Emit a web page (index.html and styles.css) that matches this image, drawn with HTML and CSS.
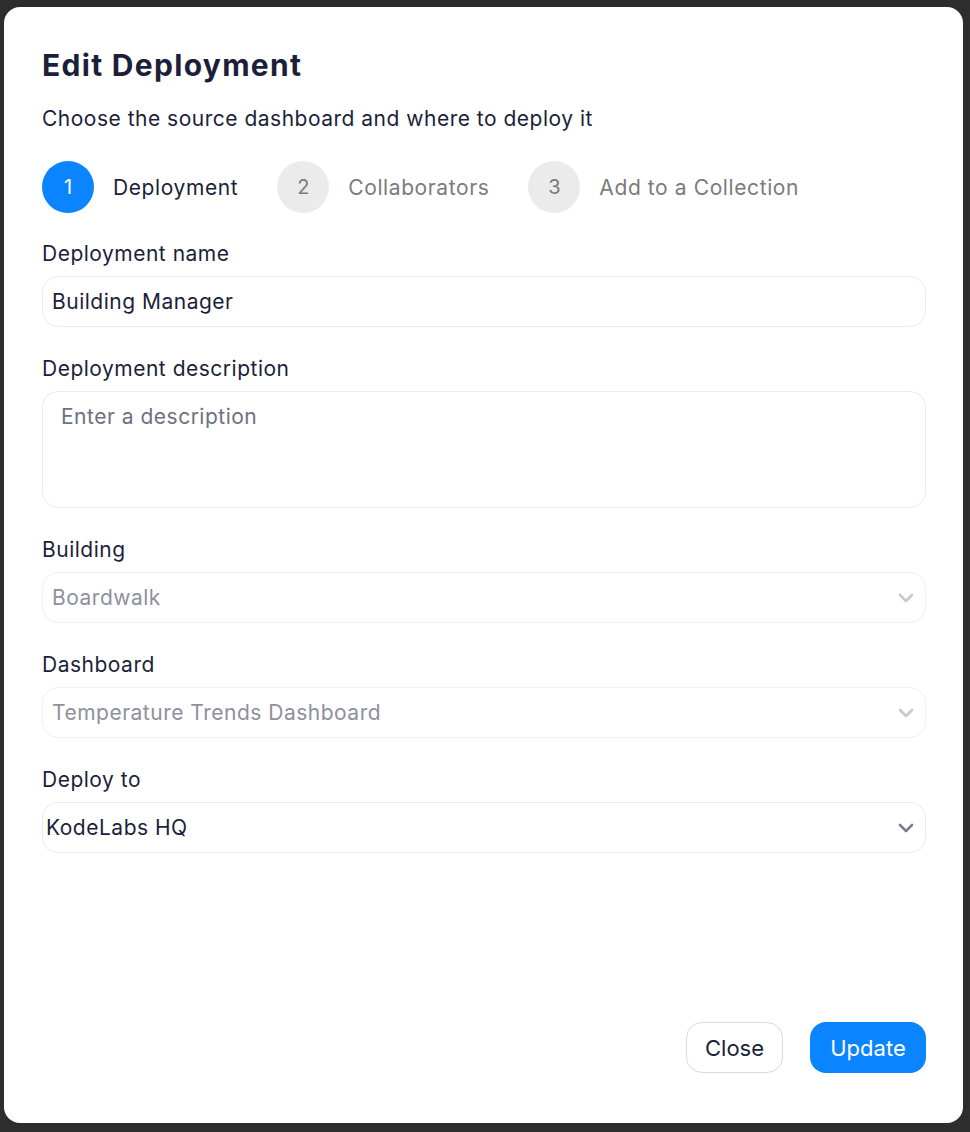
FILE: index.html
```html
<!DOCTYPE html>
<html lang="en">
<head>
<meta charset="utf-8">
<title>Edit Deployment</title>
<link rel="stylesheet" href="styles.css">
</head>
<body>
<div class="modal">
  <h1 class="title">Edit Deployment</h1>
  <p class="subtitle">Choose the source dashboard and where to deploy it</p>
  <div class="steps">
    <div class="step active"><span class="num">1</span><span class="label">Deployment</span></div>
    <div class="step"><span class="num">2</span><span class="label">Collaborators</span></div>
    <div class="step"><span class="num">3</span><span class="label">Add to a Collection</span></div>
  </div>
  <div class="form">
    <div class="field">
      <div class="flabel">Deployment name</div>
      <div class="input">Building Manager</div>
    </div>
    <div class="field">
      <div class="flabel">Deployment description</div>
      <div class="input textarea">Enter a description</div>
    </div>
    <div class="field">
      <div class="flabel">Building</div>
      <div class="input select disabled"><span>Boardwalk</span>
        <svg class="chev" width="16" height="10" viewBox="0 0 16 10"><path d="M2 2l6 6 6-6" fill="none" stroke="currentColor" stroke-width="2.6" stroke-linecap="round" stroke-linejoin="round"/></svg>
      </div>
    </div>
    <div class="field">
      <div class="flabel">Dashboard</div>
      <div class="input select disabled"><span>Temperature Trends Dashboard</span>
        <svg class="chev" width="16" height="10" viewBox="0 0 16 10"><path d="M2 2l6 6 6-6" fill="none" stroke="currentColor" stroke-width="2.6" stroke-linecap="round" stroke-linejoin="round"/></svg>
      </div>
    </div>
    <div class="field">
      <div class="flabel">Deploy to</div>
      <div class="input select open"><span>KodeLabs HQ</span>
        <svg class="chev" width="16" height="10" viewBox="0 0 16 10"><path d="M2 2l6 6 6-6" fill="none" stroke="currentColor" stroke-width="2.6" stroke-linecap="round" stroke-linejoin="round"/></svg>
      </div>
    </div>
  </div>
  <div class="footer">
    <button class="btn close">Close</button>
    <button class="btn primary">Update</button>
  </div>
</div>
</body>
</html>
```
FILE: styles.css
```css
* { box-sizing: border-box; }
html, body { margin: 0; padding: 0; }
body {
  background: #2d2d2d;
  font-family: Inter, "Liberation Sans", sans-serif;
  color: #1c1f3a;
  width: 970px;
  height: 1132px;
  padding: 7px 0 0 4px;
  overflow: hidden;
}
.modal {
  width: 959px;
  height: 1116px;
  background: #fff;
  border-radius: 16px;
  padding: 40px 37px 50px 38px;
  display: flex;
  flex-direction: column;
}
.title {
  margin: 0;
  font-size: 30px;
  line-height: 36px;
  font-weight: 700;
  letter-spacing: 1.3px;
  color: #1c1f3a;
}
.subtitle {
  margin: 24px 0 0;
  font-size: 21px;
  line-height: 24px;
  letter-spacing: 0.5px;
  color: #1c1f3a;
}
.steps {
  margin-top: 30px;
  display: flex;
  gap: 39px;
}
.step {
  display: flex;
  align-items: center;
  gap: 19px;
}
.num {
  width: 52px;
  height: 52px;
  border-radius: 50%;
  background: #ebebeb;
  color: #7b7b7b;
  font-size: 20px;
  display: flex;
  align-items: center;
  justify-content: center;
}
.label {
  font-size: 21px;
  letter-spacing: 0.6px;
  color: #7b7b7b;
}
.step.active .num { background: #0a84ff; color: #fff; }
.step.active .label { color: #1c1f3a; }
.form {
  margin-top: 29px;
  display: flex;
  flex-direction: column;
  gap: 30px;
}
.flabel {
  font-size: 21px;
  line-height: 24px;
  letter-spacing: 0.5px;
  margin-bottom: 10px;
  color: #1c1f3a;
}
.input {
  height: 51px;
  border: 1px solid #ebebef;
  border-radius: 16px;
  padding: 0 9px;
  display: flex;
  align-items: center;
  font-size: 21px;
  letter-spacing: 0.5px;
  color: #1c1f3a;
}
.textarea {
  height: 117px;
  align-items: flex-start;
  padding: 12px 18px;
  color: #6e7081;
}
.select { justify-content: space-between; padding-right: 11px; }
.select.disabled { color: #8e909c; border-color: #f1f1f4; }
.select.disabled .chev { color: #c8c8d2; }
.select.open { padding-left: 3px; }
.select.open .chev { color: #7c7d94; }
.footer {
  margin-top: auto;
  display: flex;
  justify-content: flex-end;
  gap: 27px;
}
.btn {
  height: 51px;
  border-radius: 16px;
  font-family: Inter, "Liberation Sans", sans-serif;
  font-size: 22px;
  padding: 0;
  cursor: pointer;
}
.btn.close {
  width: 97px;
  background: #fff;
  border: 1px solid #d9d9de;
  color: #1c1f3a;
}
.btn.primary {
  width: 116px;
  background: #0a84ff;
  border: none;
  color: #fff;
}
```
